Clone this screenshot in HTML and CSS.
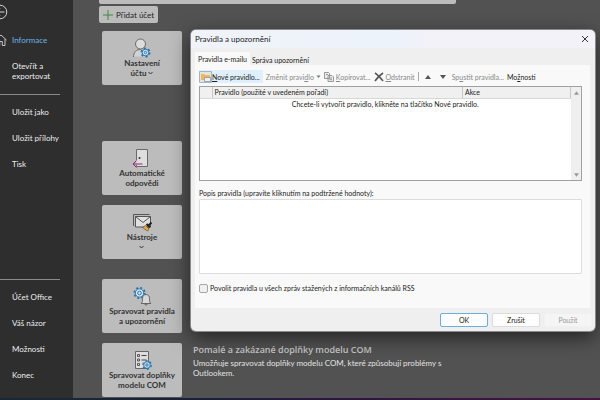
FILE: index.html
```html
<!DOCTYPE html>
<html lang="cs">
<head>
<meta charset="utf-8">
<title>Pravidla a upozornění</title>
<link rel="stylesheet" href="styles.css">
</head>
<body>
<div class="app">
  <nav class="sidebar">
    <button class="back" aria-label="Zpět">
      <svg width="16" height="16" viewBox="0 0 16 16" fill="none" stroke="#d4d4d4"><circle cx="8" cy="8" r="6.8"/><path d="M12.500 8H5M8 4.500L4.500 8L8 11.500"/></svg>
    </button>
    <a class="item current" href="#">
      <svg class="home" width="12" height="12" viewBox="0 0 12 12" fill="none" stroke="#c4c4c4"><path d="M.5 6L6 1l5.500 5M2 5v6.500h2.700V7.500h2.600v4H10V5"/></svg>
      Informace</a>
    <a class="item" href="#">Otevřít a exportovat</a>
    <hr>
    <a class="item" href="#">Uložit jako</a>
    <a class="item" href="#">Uložit přílohy</a>
    <a class="item" href="#">Tisk</a>
    <hr class="push">
    <a class="item" href="#">Účet Office</a>
    <a class="item" href="#">Váš názor</a>
    <a class="item" href="#">Možnosti</a>
    <a class="item" href="#">Konec</a>
  </nav>

  <main class="content">
    <div class="account"></div>
    <button class="add">
      <svg width="10" height="10" viewBox="0 0 10 10" stroke="#3f8a3f" stroke-width="1"><path d="M5 0v10M0 5h10"/></svg>
      Přidat účet</button>

    <div class="row spaced">
      <button class="tile">
        <svg width="20" height="20" viewBox="0 0 20 20" fill="none" stroke="#6a6a6a"><path d="M1.500 18.500c0-4 2.500-7 6.500-7 3 0 5 1.500 5.500 3v4z" fill="#d2d2d2" stroke="none"/><path d="M1.500 19c0-4.500 2.500-7.500 7-7.500"/><circle cx="8.500" cy="6" r="5" fill="#dcdcdc"/><g stroke="#2a77ae"><circle cx="13.500" cy="14.500" r="3.300" fill="#d5e2ec"/><circle cx="13.500" cy="14.500" r="4.300" stroke-width="1.500" stroke-dasharray="2.200 2.300"/><circle cx="13.500" cy="14.500" r="1.200"/></g></svg>
        <span>Nastavení<br>účtu <svg class="chev" width="5" height="4" viewBox="0 0 5 4" fill="none" stroke="#333"><path d="M.5 1l2 2 2-2"/></svg></span>
      </button>
    </div>
    <div class="row">
      <button class="tile">
        <svg width="20" height="20" viewBox="0 0 20 20" fill="none"><path d="M4.500 12V1.500h11v17h-11V17" fill="#dedede" stroke="#6a6a6a"/><circle cx="7.500" cy="10" r="1" fill="#333"/><path d="M10.500 16H1M4.500 12.500L1 16l3.500 3.500" stroke="#9b2478"/></svg>
        <span>Automatické<br>odpovědi</span>
      </button>
    </div>
    <div class="row wide">
      <button class="tile">
        <svg width="20" height="20" viewBox="0 0 20 20" fill="none" stroke="#555"><path d="M1.500 14V2.500h16"/><path d="M3.500 4.500h15v10.500h-15z" fill="#e0e0e0"/><path d="M3.500 4.500l7.500 6 7.500-6"/><path d="M19.500 10.500l-3.500 3.500M14.500 12l3.500 3.500" stroke="#222" stroke-width="2"/><path d="M13.500 13.500l3.500 3.500-1.500 2-5-3.500z" fill="#e8a93c" stroke="#5b4519" stroke-width=".6"/></svg>
        <span>Nástroje<br><svg class="chev" width="5" height="4" viewBox="0 0 5 4" fill="none" stroke="#333"><path d="M.5 1l2 2 2-2"/></svg></span>
      </button>
    </div>
    <div class="row">
      <button class="tile">
        <svg width="20" height="20" viewBox="0 0 20 20" fill="none"><g stroke="#2a77ae"><circle cx="7.500" cy="7" r="4.200" fill="#d5e2ec"/><circle cx="7.500" cy="7" r="5.300" stroke-width="1.600" stroke-dasharray="2.100 2.060"/><circle cx="7.500" cy="7" r="1.800"/></g><path d="M9 17.500c1.500-1 1.500-2 1.500-5 0-2.500 1.500-4 3.500-4s3.500 1.500 3.500 4c0 3 0 4 1.500 5z" fill="#d8d8d8" stroke="#666"/><path d="M12.500 18c.3 1.300 2.700 1.300 3 0" stroke="#666"/></svg>
        <span>Spravovat pravidla<br>a upozornění</span>
      </button>
    </div>
    <div class="row">
      <button class="tile">
        <svg width="20" height="20" viewBox="0 0 20 20" fill="none"><path d="M3.500 1.500h13v17h-13z" fill="#dedede" stroke="#666"/><path d="M9.500 5.500h5M9.500 10h5" stroke="#444"/><path d="M5.500 4.500h2v2h-2zM5.500 9h2v2h-2zM5.500 13.500h2v2h-2z" stroke="#555"/><g stroke="#2a77ae"><circle cx="15" cy="15" r="3.300" fill="#d5e2ec"/><circle cx="15" cy="15" r="4.200" stroke-width="1.400" stroke-dasharray="2.200 2.200"/><circle cx="15" cy="15" r="1.200"/></g></svg>
        <span>Spravovat doplňky<br>modelu COM</span>
      </button>
      <div class="about">
        <h2>Pomalé a zakázané doplňky modelu COM</h2>
        <p>Umožňuje spravovat doplňky modelu COM, které způsobují problémy s Outlookem.</p>
      </div>
    </div>
  </main>
</div>

<section class="dialog" role="dialog" aria-labelledby="title">
  <header>
    <h1 id="title">Pravidla a upozornění</h1>
    <button class="close" aria-label="Zavřít"><svg width="8" height="8" viewBox="0 0 8 8" stroke="#333" stroke-width="1"><path d="M1 1l6 6M7 1L1 7"/></svg></button>
  </header>
  <div class="tabs" role="tablist">
    <button class="tab active" role="tab" aria-selected="true">Pravidla e-mailu</button>
    <button class="tab" role="tab" aria-selected="false">Správa upozornění</button>
  </div>
  <div class="panel">
    <div class="toolbar">
      <button class="tool new"><svg width="13" height="12" viewBox="0 0 13 12"><path d="M.5 .5h12v11H.5z" fill="#e8e4da" stroke="#9cb6ca"/><path d="M2 3h3l1 1h5v5H2z" fill="#e9b765"/><path d="M5.500 6.500h6v4h-6z" fill="#f2f2f2" stroke="#8b9299" stroke-width=".8"/></svg><span><u>N</u>ové pravidlo...</span></button>
      <button class="tool" disabled><span>Změnit pravi<u>d</u>lo</span><svg width="5" height="4" viewBox="0 0 5 4"><path d="M.5 .5h4L2.500 3z" fill="#777"/></svg></button>
      <button class="tool" disabled><svg width="10" height="10" viewBox="0 0 10 10" fill="#eee" stroke="#8d8d8d" stroke-width=".9"><path d="M.5 .5h4l1 1v5h-5zM4 3.500h4l1.500 1.500v4.500H4z"/><path d="M5.500 6h2.500M5.500 7.700h2.500M2 2.500h2"/></svg><span><u>K</u>opírovat...</span></button>
      <button class="tool" disabled><svg width="10" height="10" viewBox="0 0 10 10" fill="none" stroke="#555" stroke-width="1.600"><path d="M1 1c3 2 5 4.500 8 8M9 1C6 3 3 6 1 9"/></svg><span><u>O</u>dstranit</span></button>
      <i class="sep"></i>
      <button class="tool arrow" aria-label="Nahoru"><svg width="6" height="4" viewBox="0 0 6 4"><path d="M0 4h6L3 0z" fill="#555"/></svg></button>
      <button class="tool arrow" aria-label="Dolů"><svg width="6" height="4" viewBox="0 0 6 4"><path d="M0 0h6L3 4z" fill="#555"/></svg></button>
      <button class="tool" disabled><span>Sp<u>u</u>stit pravidla...</span></button>
      <button class="tool"><span>Mo<u>ž</u>nosti</span></button>
    </div>
    <div class="list">
      <table>
        <thead><tr><th class="mark"></th><th>Pravidlo (použité v uvedeném pořadí)</th><th class="action">Akce</th></tr></thead>
        <tbody><tr><td colspan="3">Chcete-li vytvořit pravidlo, klikněte na tlačítko Nové pravidlo.</td></tr></tbody>
      </table>
      <div class="scroll">
        <svg width="5" height="4" viewBox="0 0 6 4"><path d="M0 4h6L3 0z" fill="#999"/></svg>
        <svg width="5" height="4" viewBox="0 0 6 4"><path d="M0 0h6L3 4z" fill="#999"/></svg>
      </div>
    </div>
    <label class="caption" for="desc">Popis pravidla (upravíte kliknutím na podtržené hodnoty):</label>
    <textarea id="desc" readonly></textarea>
    <div class="check">
      <input type="checkbox" id="rss"><label for="rss">Povolit pravidla u všech zpráv stažených z informačních kanálů RSS</label>
    </div>
  </div>
  <footer>
    <button class="btn primary">OK</button>
    <button class="btn">Zrušit</button>
    <button class="btn" disabled>Použít</button>
  </footer>
</section>
</body>
</html>
```
FILE: styles.css
```css
* { box-sizing: border-box; }
body {
  margin: 0;
  background: #525252;
  color: #222;
  font: 8px/10px Lato, "Noto Sans", sans-serif;
}
button, textarea { font: inherit; color: inherit; margin: 0; }
button { padding: 0; border: 0; background: none; }
svg { display: block; flex: none; }

.app {
  display: grid;
  grid-template-columns: 73px 1fr;
  min-height: 100vh;
  overflow: hidden;
  position: relative;
}
.app::after {
  content: "";
  position: absolute;
  inset: auto 0 0;
  height: 2px;
  background: linear-gradient(90deg, #182838, #1b2038 35%, #2b1640 55%, #44143f);
}

.sidebar {
  display: flex;
  flex-direction: column;
  padding: 4px 0 12px;
  background: #2e2e2e;
  color: #ededed;
}
.back { width: 16px; margin: 0 0 7px -8px; }
.item {
  display: flex;
  align-items: center;
  min-height: 26px;
  padding: 8px 12px;
  color: inherit;
  text-decoration: none;
}
.current { color: #6cb2e8; }
.home { margin: -1px 5px -1px -17px; }
hr {
  width: 60px;
  height: 1px;
  margin: 5px 0 4px;
  border: 0;
  background: #8a8a8a;
}
.push { margin-top: auto; }

.content {
  display: flex;
  flex-direction: column;
  align-items: flex-start;
  padding: 0 26px 2px;
}
.account {
  width: 357px;
  height: 4px;
  border-radius: 0 0 2px 2px;
  background: #bcbcbc;
}
.add {
  display: flex;
  align-items: center;
  gap: 3px;
  height: 17px;
  margin: 2px 0 8px;
  padding: 0 4px;
  border-radius: 2px;
  background: #bcbcbc;
}
.row {
  display: flex;
  gap: 11px;
  margin: 0 0 10px 3px;
}
.spaced { margin-bottom: 56px; }
.wide { margin-bottom: 20px; }
.row:last-child { margin-bottom: 0; }
.tile {
  display: flex;
  flex-direction: column;
  align-items: center;
  width: 80px;
  height: 54px;
  padding-top: 7px;
  border-radius: 2px;
  background: #bcbcbc;
  font-weight: 700;
  color: #333;
}
.chev { display: inline-block; vertical-align: 1px; }
.about { color: #e2e2e2; max-width: 260px; }
.about h2 {
  margin: 1px 0 2px;
  font: 600 9px/12px "Open Sans", "Noto Sans", sans-serif;
  color: #c6c6c6;
}
.about p { margin: 0; }

.dialog {
  position: absolute;
  top: 30px;
  left: 191px;
  right: 5px;
  padding: 0 3px 4px 4px;
  border-radius: 5px;
  background: #efefef;
  box-shadow: 0 0 0 1px #8a8a8a, 0 6px 20px #0009;
  font-size: 7px;
}
.dialog header {
  display: flex;
  align-items: center;
  justify-content: space-between;
  height: 18px;
  margin: 0 -3px 4px -4px;
  padding: 0 6px 0 4px;
  border-radius: 5px 5px 0 0;
  background: linear-gradient(90deg, #f0f3f9, #edf3fb 50%, #f3f2f8 60%);
}
h1 { margin: 0; font-size: 8px; font-weight: 400; }
.tabs { display: flex; }
.tab { height: 13px; padding: 2px 2px 0; }
.active { padding: 0 3px; background: #f9f9f9; }
.panel {
  display: flex;
  flex-direction: column;
  margin-right: 2px;
  padding: 4px 8px 15px 4px;
  background: #f9f9f9;
}
.toolbar {
  display: flex;
  align-items: center;
  gap: 3px;
  height: 15px;
  margin-bottom: 2px;
}
.tool { display: flex; align-items: center; gap: 2px; height: 13px; white-space: nowrap; }
.tool:disabled { color: #888; }
.new { padding-right: 3px; gap: 0; background: #dfeffc; }
.arrow { padding: 0 3px; }
.sep { width: 1px; height: 9px; background: #aaa; }

.list {
  display: flex;
  height: 95px;
  border: 1px solid #a0a0a0;
  background: #fff;
}
table { flex: 1; align-self: flex-start; border-collapse: collapse; table-layout: fixed; }
th {
  height: 11px;
  padding: 0 2px;
  border-right: 1px solid #c8c8c8;
  border-bottom: 1px solid #d8d8d8;
  background: #f0f0f0;
  font-weight: 400;
  text-align: left;
}
.mark { width: 12px; }
.action { width: 108px; }
td { padding: 0; text-align: center; }
.scroll {
  display: flex;
  flex-direction: column;
  justify-content: space-between;
  align-items: center;
  width: 10px;
  padding: 4px 0 3px;
  background: #efefef;
}
.caption { margin: 7px 0 1px; }
textarea {
  height: 75px;
  border: 1px solid #dcdcdc;
  border-radius: 1px;
  background: #fff;
  resize: none;
}
.check { display: flex; align-items: center; gap: 2px; margin-top: 9px; }
.check input {
  appearance: none;
  width: 9px;
  height: 9px;
  margin: 0;
  border: 1px solid #a5a5a5;
  border-radius: 2px;
  background: #f0f0f0;
}
footer {
  display: flex;
  justify-content: flex-end;
  gap: 4px;
  padding-top: 5px;
}
.btn {
  width: 48px;
  height: 14px;
  border: 1px solid #dcdcdc;
  border-radius: 2px;
  background: #fdfdfd;
}
.primary { border-color: #6aaede; }
.btn:disabled { border-color: #f0f0f0; background: #f5f5f5; color: #9a9a9a; }
```
